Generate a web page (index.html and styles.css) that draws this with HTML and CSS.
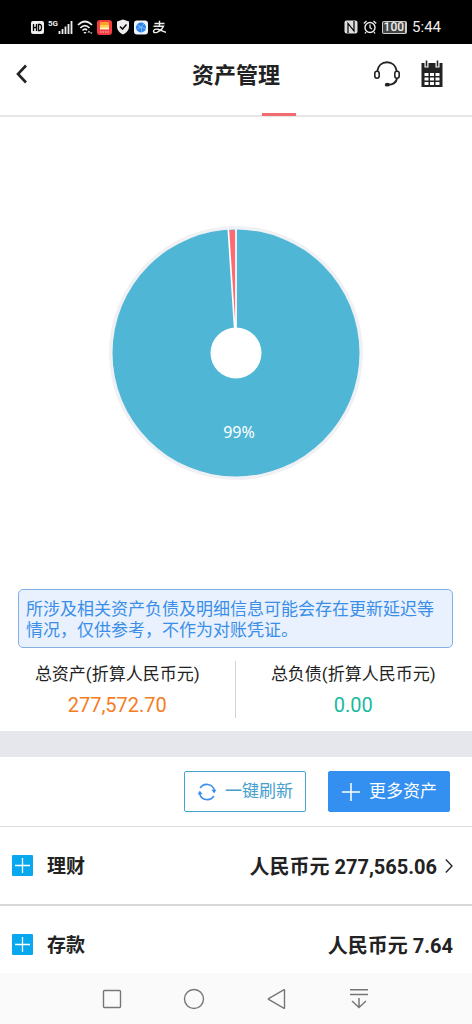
FILE: index.html
```html
<!DOCTYPE html>
<html lang="zh-CN">
<head>
<meta charset="utf-8">
<meta name="viewport" content="width=device-width, initial-scale=1">
<title>资产管理</title>
<link rel="stylesheet" href="styles.css">
</head>
<body>
<div class="app">
  <div class="status">
    <div class="status-side">
      <svg width="14" height="14" viewBox="0 0 14 14"><rect x="1" y="1" width="13" height="13" rx="2" fill="#eee"/><path d="M3.500 4v7M6.500 4v7M3.500 7.500h3M8.500 4.500v6h1.200q1.800 0 1.800-3t-1.800-3z" fill="none" stroke="#000" stroke-width="1.300"/></svg>
      <div class="signal">
        <span class="net">5G</span>
        <svg width="15" height="14" viewBox="0 0 15 14"><path d="M1.500 14v-3M4.500 14V9M7.500 14V6.500M10.500 14V4M13.500 14V1" stroke="#eee" stroke-width="1.800"/></svg>
      </div>
      <svg width="16" height="14" viewBox="0 0 16 14"><path d="M1 5Q8-2 15 5M3.300 8Q8 3.300 12.500 8M5.500 10.500Q8 8 10 10.300" fill="none" stroke="#eee" stroke-width="1.700"/><path d="M6.300 12L8 14l1.500-2zM10.500 12.500l1.500-2 1.200 2zM13 12.500h2.500l-1.200 1.500z" fill="#eee"/></svg>
      <svg width="15" height="15" viewBox="0 0 15 15"><rect width="15" height="15" rx="3" fill="#f23c42"/><path d="M3 2h9v3H3z" fill="#ff9d2e"/><path d="M3 5h9v3H3z" fill="#ffd04a"/><path d="M3 7.500h9v2H3z" fill="#fff2c8"/><path d="M3 12h9" stroke="#ffd0cc" stroke-dasharray="1.500 1"/></svg>
      <svg width="14" height="16" viewBox="0 0 14 16"><path d="M7 .5l6 2v5q0 5-6 8-6-3-6-8v-5z" fill="#eee"/><path d="M4 7.500l2.500 2.500L10.500 5.500" fill="none" stroke="#111" stroke-width="1.600"/></svg>
      <svg width="14" height="15" viewBox="0 0 14 15"><rect y=".5" width="14" height="14" rx="3" fill="#eef5ff"/><circle cx="7" cy="7.500" r="5" fill="#2e83ea"/><path d="M3 5l4 2 3-3M7 7l1 5M3 9l4-2 5 2" fill="none" stroke="#8cc4ff" stroke-width=".8"/></svg>
      <svg width="15" height="14" viewBox="0 0 15 14"><path d="M2.500 3.500h10M7.500 .8v5M1.500 6.200h10Q9.500 10.500 5 12.300 1.500 13.300 1.500 11.200 2 8.500 6 9.300L14 12.300" fill="none" stroke="#eee" stroke-width="1.400"/></svg>
    </div>
    <div class="status-side status-right">
      <svg width="14" height="14" viewBox="0 0 14 14"><rect x=".5" y=".5" width="13" height="13" rx="2" fill="#ddd"/><path d="M4 13V3.500L10 11V1" fill="none" stroke="#000" stroke-width="1.200"/></svg>
      <svg width="14" height="14" viewBox="0 0 14 14"><circle cx="7" cy="7.500" r="5" fill="none" stroke="#eee" stroke-width="1.400"/><path d="M7 4.500v3.200l2 1.300M.8 3.500L3.500 1M10.500 1l2.700 2.500M3 12l-1 1.500M11 12l1 1.500" fill="none" stroke="#eee" stroke-width="1.300"/></svg>
      <span class="battery">100</span>
      <span class="clock">5:44</span>
    </div>
  </div>

  <header class="header">
    <button class="icon-btn back" aria-label="返回"><svg width="14" height="20" viewBox="0 0 14 20"><path d="M12 1.500L4 10l8 8.500" fill="none" stroke="#222" stroke-width="2.600"/></svg></button>
    <h1 class="title">资产管理</h1>
    <div class="tools">
      <button class="icon-btn" aria-label="客服"><svg width="28" height="28" viewBox="0 0 28 28"><path d="M4.200 11.500C5 5.500 9 2.200 14 2.200s9 3.300 9.800 9.300M24.200 18c-1 4.500-4.200 6.800-9.200 6.800" fill="none" stroke="#222" stroke-width="1.900"/><rect x="1.800" y="11.200" width="4.400" height="7" rx="2.200" fill="#fff" stroke="#222" stroke-width="1.600"/><rect x="21.800" y="11.200" width="4.400" height="7" rx="2.200" fill="#fff" stroke="#222" stroke-width="1.600"/><ellipse cx="14.300" cy="24.700" rx="2.500" ry="1.900" fill="#222"/></svg></button>
      <button class="icon-btn" aria-label="日历"><svg width="22" height="28" viewBox="0 0 22 28"><path d="M.5 3h21v24H.5z" fill="#222"/><path d="M3.500 0h4v7.500h-4zM14.500 0h4v7.500h-4z" fill="#fff"/><path d="M5.500 .5v6M16.500 .5v6" stroke="#222" stroke-width="1.600"/><path d="M3.500 13h4v3h-4zM9 13h4v3H9zM14.500 13h4v3h-4zM3.500 17.500h4v3h-4zM9 17.500h4v3H9zM14.500 17.500h4v3h-4zM3.500 22h4v3h-4zM9 22h4v3H9zM14.500 22h4v3h-4z" fill="#fff"/></svg></button>
    </div>
    <span class="marker"></span>
  </header>

  <main class="content">
    <section class="chart">
      <svg class="pie" viewBox="-127 -127 254 254" role="img" aria-label="资产占比">
        <circle r="127" fill="#f0f1f4"/>
        <circle r="123.500" fill="#4fb6d6"/>
        <path d="M0 0L-7.700-122.800A123 123 0 0 1 0-123z" fill="#fc6a72"/>
        <path d="M-1-20L-7.700-124M0-20V-124" stroke="#fff" stroke-width="1.700"/>
        <circle r="25.500" fill="#fff"/>
        <text class="pie-label" x="3" y="85" text-anchor="middle">99%</text>
      </svg>
    </section>

    <p class="notice">所涉及相关资产负债及明细信息可能会存在更新延迟等情况，仅供参考，不作为对账凭证。</p>

    <section class="summary">
      <div class="sum asset-col"><span>总资产(折算人民币元)</span><span class="sum-value asset">277,572.70</span></div>
      <div class="sum"><span>总负债(折算人民币元)</span><span class="sum-value debt">0.00</span></div>
    </section>

    <div class="actions">
      <button class="btn refresh"><svg width="20" height="20" viewBox="0 0 20 20"><path d="M3.200 6A7.800 7.800 0 0 1 17.300 8M16.800 14A7.800 7.800 0 0 1 2.700 12" fill="none" stroke="#3b8ff0" stroke-width="1.600"/><path d="M14.300 7.800h5.200l-2.300 3.500zM.5 12.200h5.200l-2.900-3.500z" fill="#3b8ff0"/></svg>一键刷新</button>
      <button class="btn more"><svg width="20" height="20" viewBox="0 0 20 20"><path d="M1 10h18M10 1v18" stroke="#fff" stroke-width="1.500"/></svg>更多资产</button>
    </div>

    <div class="row">
      <button class="icon-btn" aria-label="展开理财"><svg width="21" height="21" viewBox="0 0 21 21"><rect width="21" height="21" rx="1" fill="#08a8ee"/><path d="M3 10.500h15M10.500 3v15" stroke="#fff" stroke-width="1.300"/></svg></button>
      <h2 class="name">理财</h2>
      <span class="amount">人民币元 277,565.06</span>
      <svg class="chevron" width="8" height="16" viewBox="0 0 8 16"><path d="M.8 1.500L7 8 .8 14.500" fill="none" stroke="#222" stroke-width="1.300"/></svg>
    </div>
    <div class="row">
      <button class="icon-btn" aria-label="展开存款"><svg width="21" height="21" viewBox="0 0 21 21"><rect width="21" height="21" rx="1" fill="#08a8ee"/><path d="M3 10.500h15M10.500 3v15" stroke="#fff" stroke-width="1.300"/></svg></button>
      <h2 class="name">存款</h2>
      <span class="amount">人民币元 7.64</span>
    </div>
  </main>

  <nav class="nav">
    <button class="icon-btn" aria-label="最近任务"><svg width="22" height="22" viewBox="0 0 22 22"><rect x="2.500" y="2.500" width="17" height="17" rx="1" fill="none" stroke="#777" stroke-width="1.400"/></svg></button>
    <button class="icon-btn" aria-label="主屏幕"><svg width="22" height="22" viewBox="0 0 22 22"><circle cx="11" cy="11" r="9.500" fill="none" stroke="#777" stroke-width="1.400"/></svg></button>
    <button class="icon-btn" aria-label="后退"><svg width="22" height="22" viewBox="0 0 22 22"><path d="M18.500 2.200v17.600q0 .8-.8.400L2.600 11.400q-.6-.4 0-.8L17.700 1.800q.8-.4.8.4z" fill="none" stroke="#777" stroke-width="1.400"/></svg></button>
    <button class="icon-btn" aria-label="下拉通知"><svg width="22" height="22" viewBox="0 0 22 22"><path d="M2 1.800h18M2 6.500h18M11 10v9.500M4 13l7 6.500L18 13" fill="none" stroke="#777" stroke-width="1.500"/></svg></button>
  </nav>
</div>
</body>
</html>
```
FILE: styles.css
```css
* {
  box-sizing: border-box;
}

body {
  margin: 0;
  background: #fff;
  color: #222;
  font-family: Roboto, "Noto Sans CJK SC", sans-serif;
  font-size: 17px;
  line-height: 21px;
}

button {
  font: inherit;
  cursor: pointer;
}

svg {
  display: block;
  flex: none;
}

.app {
  display: flex;
  flex-direction: column;
  height: 100vh;
}

.status {
  display: flex;
  flex: none;
  justify-content: space-between;
  height: 44px;
  padding: 10px 31px 0 30px;
  background: #000;
  color: #eee;
}

.status-side {
  display: flex;
  align-items: center;
  gap: 4px;
  height: 34px;
}

.status-right {
  gap: 5px;
}

.signal {
  display: flex;
  align-items: center;
}

.net {
  align-self: flex-start;
  font-size: 8px;
  font-weight: 700;
  line-height: 8px;
}

.battery {
  padding: 0 1px;
  border: 1px solid #ccc;
  border-right-width: 2px;
  border-radius: 2px;
  background: #444;
  font-size: 12px;
  font-weight: 500;
  line-height: 11px;
}

.clock {
  font-size: 15px;
}

.header {
  position: relative;
  display: grid;
  flex: none;
  grid-template-columns: 1fr auto 1fr;
  align-items: center;
  height: 73px;
  padding: 0 29px 11px 14px;
  border-bottom: 2px solid #e8e8e8;
}

.icon-btn {
  display: block;
  padding: 0;
  border: 0;
  background: none;
}

.back {
  justify-self: start;
}

.title {
  margin: 0 0 0 15px;
  padding-top: 4px;
  font-size: 22px;
  line-height: 32px;
}

.tools {
  display: flex;
  justify-content: flex-end;
  align-items: center;
  gap: 20px;
}

.marker {
  position: absolute;
  bottom: -1px;
  left: calc(50% + 26px);
  width: 34px;
  height: 3px;
  background: #f16b70;
}

.content {
  flex: 1;
  min-height: 0;
  overflow-y: auto;
  scrollbar-width: none;
}

.chart {
  display: flex;
  justify-content: center;
  padding: 109px 20px;
}

.pie {
  width: 254px;
  height: 254px;
}

.pie-label {
  fill: #fff;
  font-family: "Noto Sans", sans-serif;
  font-size: 16px;
}

.notice {
  margin: 0 19px 0 18px;
  padding: 9px 7px 6px;
  border: 1px solid #82b0e6;
  border-radius: 5px;
  background: #e8f1fd;
  color: #3b8ee8;
}

.summary {
  display: grid;
  grid-template-columns: 1fr 1fr;
  padding: 13px 1px 13px 0;
  border-bottom: 26px solid #e6e7ec;
}

.sum {
  display: flex;
  flex-direction: column;
  align-items: center;
  gap: 8px;
  padding: 3px 0 1px;
}

.asset-col {
  border-right: 1px solid #d4d4d4;
}

.sum-value {
  font-size: 20px;
  line-height: 24px;
}

.asset {
  color: #f57c1f;
}

.debt {
  color: #18b9a2;
}

.actions {
  display: flex;
  justify-content: flex-end;
  gap: 22px;
  padding: 14px 22px 14px;
  border-bottom: 1px solid #ddd;
}

.btn {
  display: flex;
  align-items: center;
  justify-content: center;
  gap: 8px;
  width: 122px;
  height: 41px;
  padding: 0;
  border: 1px solid #338ff0;
  border-radius: 2px;
}

.refresh {
  border-color: #45a5cf;
  background: #fff;
  color: #45a0cc;
}

.more {
  background: #338ff0;
  color: #fff;
}

.row {
  display: flex;
  align-items: center;
  height: 79px;
  padding: 0 19px 0 12px;
  border-bottom: 2px solid #d8d8d8;
}

.name {
  flex: 1;
  margin: 0 0 0 14px;
  padding-top: 3px;
  font-size: 19px;
  line-height: 28px;
}

.amount {
  padding-top: 3px;
  font-size: 20px;
  font-weight: 700;
}

.chevron {
  margin-left: 8px;
}

.nav {
  display: flex;
  flex: none;
  justify-content: space-between;
  align-items: center;
  height: 51px;
  padding: 0 102px 0 101px;
  background: #fafafa;
}
```
